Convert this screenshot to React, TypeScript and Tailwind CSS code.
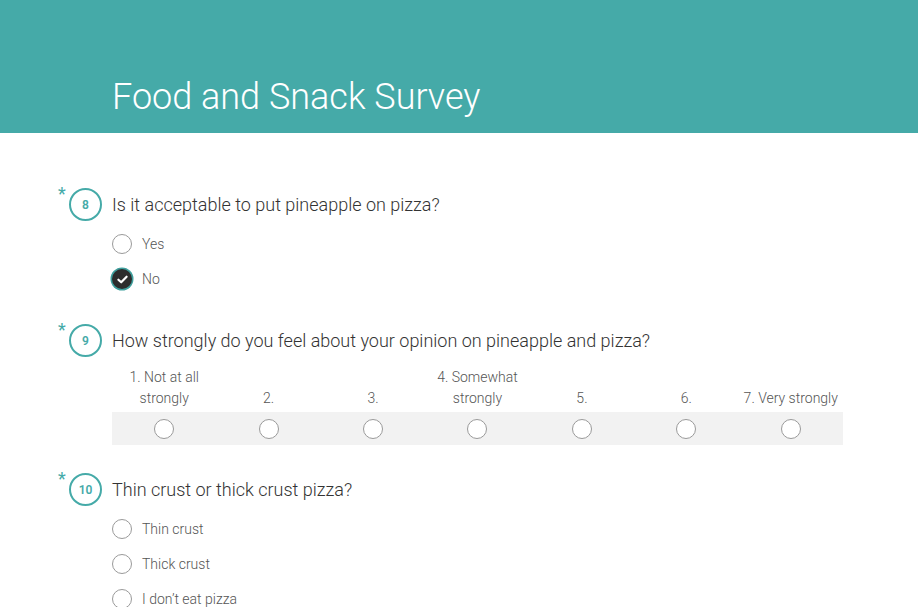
import { useState } from 'react';

function Badge({ n }: { n: number }) {
  return (
    <div className="relative shrink-0">
      <span className="absolute -left-[11px] -top-[3px] text-[18px] leading-none text-[#45aaa8]">*</span>
      <div className="w-[33px] h-[33px] rounded-full border-2 border-[#45aaa8] flex items-center justify-center text-[12px] font-semibold text-[#45aaa8]">
        {n}
      </div>
    </div>
  );
}

function Radio({ checked, onClick }: { checked?: boolean; onClick?: () => void }) {
  if (checked) {
    return (
      <button
        type="button"
        onClick={onClick}
        className="w-[20px] h-[20px] rounded-full bg-[#2d2d2d] flex items-center justify-center shadow-[0_0_0_1.5px_#3f9f9d] shrink-0"
      >
        <svg width="13" height="13" viewBox="0 0 12 12" fill="none">
          <path d="M2.2 6.2 L4.8 8.6 L9.8 3.4" stroke="white" strokeWidth="2" strokeLinecap="round" strokeLinejoin="round" />
        </svg>
      </button>
    );
  }
  return (
    <button
      type="button"
      onClick={onClick}
      className="w-[20px] h-[20px] rounded-full border border-[#9a9a9a] bg-white shrink-0"
    />
  );
}

function Question({ n, title }: { n: number; title: string }) {
  return (
    <div className="flex items-center gap-[10px]">
      <Badge n={n} />
      <h2 className="text-[18px] font-light text-[#333]">{title}</h2>
    </div>
  );
}

function Options({ items, value, onChange }: { items: string[]; value: string; onChange: (v: string) => void }) {
  return (
    <div className="flex flex-col gap-[15px] pl-[43px] mt-[13px]">
      {items.map((item) => (
        <div key={item} className="flex items-center gap-[10px] h-[20px]">
          <Radio checked={value === item} onClick={() => onChange(item)} />
          <span className="text-[14px] font-light text-[#555]">{item}</span>
        </div>
      ))}
    </div>
  );
}

const scale = [
  '1. Not at all strongly',
  '2.',
  '3.',
  '4. Somewhat strongly',
  '5.',
  '6.',
  '7. Very strongly',
];

export default function App() {
  const [pineapple, setPineapple] = useState('No');
  const [strength, setStrength] = useState<number | null>(null);
  const [crust, setCrust] = useState('');

  return (
    <div className="min-h-screen bg-white" style={{ fontFamily: 'Roboto, "Liberation Sans", sans-serif' }}>
      <header className="h-[133px] bg-[#45aaa8] pl-[112px] pt-[73px]">
        <h1 className="text-[36px] leading-[48px] font-light text-white">Food and Snack Survey</h1>
      </header>

      <main className="pl-[69px] pr-[75px]">
        <section className="pt-[55px]">
          <Question n={8} title="Is it acceptable to put pineapple on pizza?" />
          <Options items={['Yes', 'No']} value={pineapple} onChange={setPineapple} />
        </section>

        <section className="pt-[35px]">
          <Question n={9} title="How strongly do you feel about your opinion on pineapple and pizza?" />
          <div className="ml-[43px] mt-[10px]">
            <div className="grid grid-cols-7 items-end">
              {scale.map((label) => (
                <div key={label} className="text-center text-[14px] leading-[21px] font-light text-[#555] px-[2px]">
                  {label}
                </div>
              ))}
            </div>
            <div className="grid grid-cols-7 bg-[#f2f2f2] h-[33px] mt-[3px] items-center">
              {scale.map((label, i) => (
                <div key={label} className="flex justify-center">
                  <Radio checked={strength === i} onClick={() => setStrength(i)} />
                </div>
              ))}
            </div>
          </div>
        </section>

        <section className="pt-[28px]">
          <Question n={10} title="Thin crust or thick crust pizza?" />
          <Options items={['Thin crust', 'Thick crust', 'I don’t eat pizza']} value={crust} onChange={setCrust} />
        </section>
      </main>
    </div>
  );
}
